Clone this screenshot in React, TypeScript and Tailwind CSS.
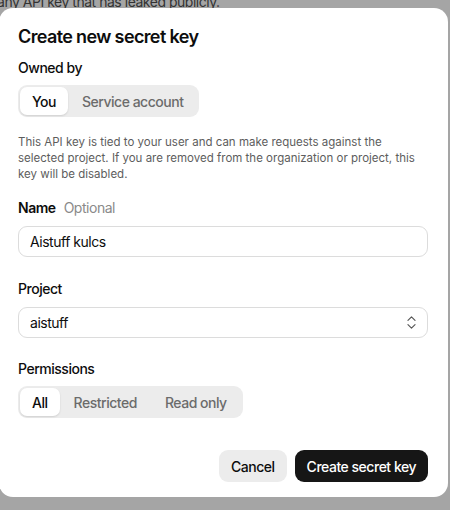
import { ChevronsUpDown } from 'lucide-react'

type SegmentedProps = {
  options: string[]
  selected: string
}

const Segmented = ({ options, selected }: SegmentedProps) => {
  return (
    <div className="flex h-[32px] w-fit items-center rounded-[9px] bg-[#ececec] p-[2px]">
      {options.map((option) => (
        <div
          key={option}
          className={
            option === selected
              ? 'flex h-full items-center rounded-[7px] bg-white px-[12px] text-[14px] font-medium text-[#0d0d0d] shadow-[0_1px_2px_rgba(0,0,0,0.12)]'
              : 'flex h-full items-center px-[14px] text-[14px] font-medium text-[#6b6b6b]'
          }
        >
          {option}
        </div>
      ))}
    </div>
  )
}

export default function App() {
  return (
    <div
      className="relative h-[510px] w-[450px] overflow-hidden bg-[#a5a5a5] tracking-[-0.03em]"
      style={{ fontFamily: 'Inter, "Noto Sans", sans-serif' }}
    >
      <div className="-ml-[3px] -mt-[8px] text-[14px] leading-[20px] text-[#333333]">
        any API key that has leaked publicly.
      </div>

      <div className="absolute left-[-1px] top-[8px] flex h-[489px] w-[449px] flex-col rounded-[14px] bg-white pb-[15px] pl-[19px] pr-[20px] pt-[17px]">
        <h2 className="text-[18px] font-semibold leading-[24px] tracking-[-0.035em] text-[#0d0d0d]">
          Create new secret key
        </h2>

        <div className="mt-[9px] text-[14px] font-medium leading-[20px] text-[#0d0d0d]">
          Owned by
        </div>
        <div className="mt-[7px]">
          <Segmented options={['You', 'Service account']} selected="You" />
        </div>

        <p className="mt-[17px] text-[11.5px] leading-[16px] tracking-normal text-[#5d5d5d]">
          This API key is tied to your user and can make requests against the selected project. If
          you are removed from the organization or project, this key will be disabled.
        </p>

        <div className="mt-[16px] flex items-baseline gap-[8px] text-[14px] leading-[20px]">
          <span className="font-semibold text-[#0d0d0d]">Name</span>
          <span className="text-[#8a8a8a]">Optional</span>
        </div>
        <div className="mt-[8px] flex h-[31px] items-center rounded-[9px] border border-[#dcdcdc] px-[11px] text-[14px] text-[#0d0d0d]">
          Aistuff kulcs
        </div>

        <div className="mt-[22px] text-[14px] font-medium leading-[20px] text-[#0d0d0d]">
          Project
        </div>
        <div className="mt-[8px] flex h-[31px] items-center justify-between rounded-[9px] border border-[#dcdcdc] pl-[11px] pr-[7px] text-[14px] text-[#0d0d0d]">
          <span>aistuff</span>
          <ChevronsUpDown size={17} strokeWidth={1.6} color="#555555" />
        </div>

        <div className="mt-[21px] text-[14px] font-medium leading-[20px] text-[#0d0d0d]">
          Permissions
        </div>
        <div className="mt-[7px]">
          <Segmented options={['All', 'Restricted', 'Read only']} selected="All" />
        </div>

        <div className="mt-auto flex justify-end gap-[8px]">
          <button className="h-[32px] rounded-[9px] bg-[#ececec] px-[12px] text-[14px] font-medium text-[#0d0d0d]">
            Cancel
          </button>
          <button className="h-[32px] rounded-[9px] bg-[#161616] px-[12px] text-[14px] font-medium text-white">
            Create secret key
          </button>
        </div>
      </div>
    </div>
  )
}
